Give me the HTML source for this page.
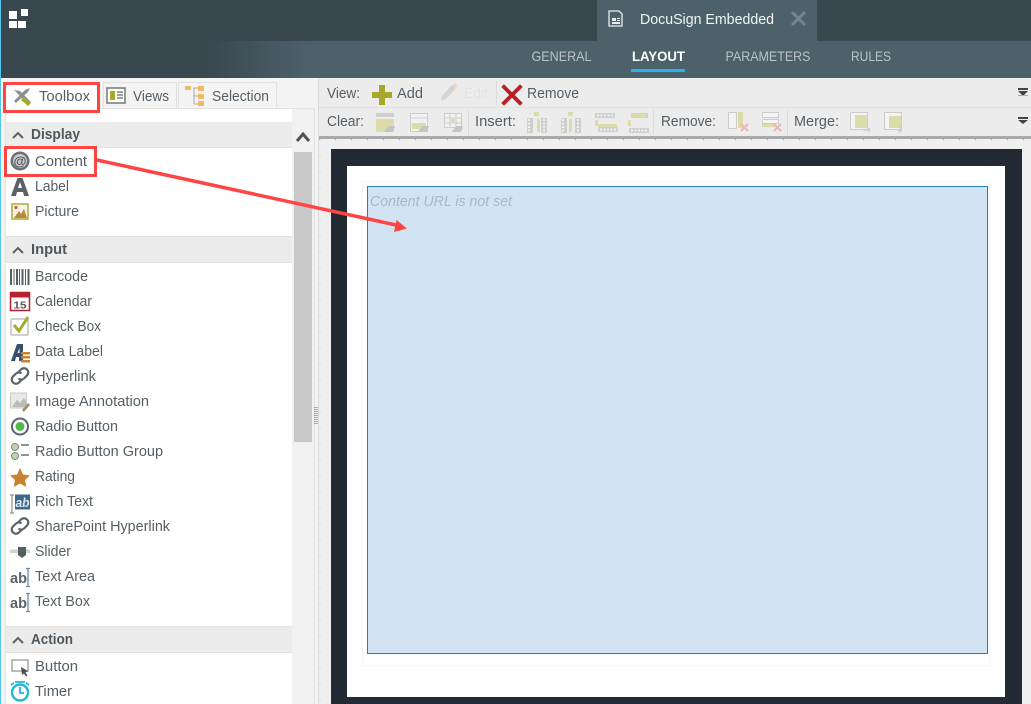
<!DOCTYPE html>
<html><head><meta charset="utf-8"><style>
html,body{margin:0;padding:0;background:#fff;overflow:hidden}
svg{display:block}
text{font-family:"Liberation Sans",sans-serif;font-size:14.8px;fill:#555e63}
.h{font-weight:bold;fill:#50585d}
.n{fill:#b9c3c7}
.y{fill:#dcdcaa}.l{fill:#cfcfcf}
</style></head><body>
<svg width="1031" height="704" viewBox="0 0 1031 704" xmlns="http://www.w3.org/2000/svg">
<defs><linearGradient id="hg" x1="0" x2="1"><stop offset="0" stop-color="#39474f"/><stop offset="0.2" stop-color="#39474f"/><stop offset="0.3" stop-color="#4d616b"/><stop offset="1" stop-color="#4d616b"/></linearGradient></defs>
<!-- header -->
<rect width="1031" height="78" fill="#39474f"/>
<rect y="41" width="1031" height="37" fill="url(#hg)"/>
<rect x="597" width="220" height="41" fill="#4d616b"/>
<rect width="1" height="704" fill="#55c5ea"/>
<path fill="#fff" d="M9 11h8v8H9zM21 9h7v7h-7zM9 21h8v7H9zM18 21h8v7h-8z"/>
<path fill="none" stroke="#e8ecee" stroke-width="1.300" d="M610 11h9l3 3v12h-13V11z"/>
<path fill="#e8ecee" d="M612 18h4v3h-4zM617 18h3v1h-3zM617 20h3v1h-3zM612 22h8v2h-8z"/>
<text x="640" y="24" textLength="134" lengthAdjust="spacingAndGlyphs" style="fill:#f2f5f6;font-size:15px">DocuSign Embedded</text>
<path d="M792 12l13 13M805 12l-13 13" stroke="#76858c" stroke-width="3" fill="none"/>
<text class="n" x="531.500" y="61" textLength="60" lengthAdjust="spacingAndGlyphs" style="font-size:14px">GENERAL</text>
<text x="632" y="61" textLength="53" lengthAdjust="spacingAndGlyphs" style="fill:#fff;font-weight:bold;font-size:14px">LAYOUT</text>
<text class="n" x="725.500" y="61" textLength="85" lengthAdjust="spacingAndGlyphs" style="font-size:14px">PARAMETERS</text>
<text class="n" x="851" y="61" textLength="40" lengthAdjust="spacingAndGlyphs" style="font-size:14px">RULES</text>
<rect x="631" y="69" width="54" height="3" fill="#29b2ec"/>
<!-- left panel -->
<rect x="1" y="78" width="317" height="626" fill="#f3f3f3"/>
<rect x="5.500" y="108.500" width="309" height="600" fill="#f1f1f1" stroke="#e2e2e2"/>
<rect x="6" y="109" width="286" height="595" fill="#fff"/>
<rect x="6" y="122" width="286" height="25" fill="#ececec"/><rect x="6" y="147" width="286" height="1" fill="#e2e2e2"/>
<rect x="6" y="236" width="286" height="1" fill="#e2e2e2"/><rect x="6" y="237" width="286" height="25" fill="#ececec"/><rect x="6" y="262" width="286" height="1" fill="#e2e2e2"/>
<rect x="6" y="626" width="286" height="1" fill="#e2e2e2"/><rect x="6" y="627" width="286" height="25" fill="#ececec"/><rect x="6" y="652" width="286" height="1" fill="#e2e2e2"/>
<!-- tabs -->
<rect x="5" y="83" width="94" height="26" fill="#fff"/>
<rect x="103.500" y="82.500" width="73" height="26" fill="#f4f4f4" stroke="#e2e2e2"/>
<rect x="178.500" y="82.500" width="98" height="26" fill="#f4f4f4" stroke="#e2e2e2"/>
<path d="M14 90l6 1 11 11-3 2-11-11z" fill="#8f8f8f"/><path d="M30 88l-2 4-12 11-2-2 11-11z" fill="#8f8f8f"/>
<path d="M24 97l7 6-3 3-7-6z" fill="#a5a92e"/>
<text x="39" y="101" textLength="51" lengthAdjust="spacingAndGlyphs" style="font-size:15px">Toolbox</text>
<rect x="107" y="88" width="18" height="15" fill="#fff" stroke="#777" stroke-width="1.500"/>
<rect x="110" y="91" width="5" height="9" fill="#a5a92e"/><path d="M117 92h6M117 95h6M117 98h6" stroke="#666" stroke-width="1.300"/>
<text x="133" y="101" textLength="36" lengthAdjust="spacingAndGlyphs" style="font-size:15px">Views</text>
<path d="M185 86h6v4h-6zM198 86h6v5h-6zM198 94h6v5h-6zM198 101h6v5h-6z" fill="#efb968"/>
<path d="M193 88h5M194 88v16M194 96h4M194 104h4" stroke="#aaa" fill="none"/>
<text x="212" y="101" textLength="57" lengthAdjust="spacingAndGlyphs" style="font-size:15px">Selection</text>
<!-- section headers -->
<path d="M13 138l5-5 5 5" fill="none" stroke="#5a6266" stroke-width="2"/>
<text class="h" x="31" y="139" textLength="49" lengthAdjust="spacingAndGlyphs">Display</text>
<path d="M13 253l5-5 5 5" fill="none" stroke="#5a6266" stroke-width="2"/>
<text class="h" x="31" y="254" textLength="36" lengthAdjust="spacingAndGlyphs">Input</text>
<path d="M13 643l5-5 5 5" fill="none" stroke="#5a6266" stroke-width="2"/>
<text class="h" x="31" y="644" textLength="42" lengthAdjust="spacingAndGlyphs">Action</text>
<!-- scrollbar -->
<path d="M297 141l6-7 6 7" fill="none" stroke="#4c5459" stroke-width="3"/>
<rect x="294" y="152" width="18" height="290" fill="#c8c8c8"/>
<path d="M315 407v17M317 407v17" stroke="#5a6266" stroke-dasharray="1 1"/>
<rect x="318" y="78" width="1" height="626" fill="#d9d9d9"/>
<!-- items -->
<text x="35" y="166" textLength="52" lengthAdjust="spacingAndGlyphs">Content</text>
<text x="35" y="191" textLength="34" lengthAdjust="spacingAndGlyphs">Label</text>
<text x="35" y="216" textLength="44" lengthAdjust="spacingAndGlyphs">Picture</text>
<text x="35" y="281" textLength="53" lengthAdjust="spacingAndGlyphs">Barcode</text>
<text x="35" y="306" textLength="57" lengthAdjust="spacingAndGlyphs">Calendar</text>
<text x="35" y="331" textLength="66" lengthAdjust="spacingAndGlyphs">Check Box</text>
<text x="35" y="356" textLength="68" lengthAdjust="spacingAndGlyphs">Data Label</text>
<text x="35" y="381" textLength="61" lengthAdjust="spacingAndGlyphs">Hyperlink</text>
<text x="35" y="406" textLength="114" lengthAdjust="spacingAndGlyphs">Image Annotation</text>
<text x="35" y="431" textLength="83" lengthAdjust="spacingAndGlyphs">Radio Button</text>
<text x="35" y="456" textLength="128" lengthAdjust="spacingAndGlyphs">Radio Button Group</text>
<text x="35" y="481" textLength="40" lengthAdjust="spacingAndGlyphs">Rating</text>
<text x="35" y="506" textLength="58" lengthAdjust="spacingAndGlyphs">Rich Text</text>
<text x="35" y="531" textLength="135" lengthAdjust="spacingAndGlyphs">SharePoint Hyperlink</text>
<text x="35" y="556" textLength="36" lengthAdjust="spacingAndGlyphs">Slider</text>
<text x="35" y="581" textLength="60" lengthAdjust="spacingAndGlyphs">Text Area</text>
<text x="35" y="606" textLength="55" lengthAdjust="spacingAndGlyphs">Text Box</text>
<text x="35" y="671" textLength="43" lengthAdjust="spacingAndGlyphs">Button</text>
<text x="35" y="696" textLength="37" lengthAdjust="spacingAndGlyphs">Timer</text>
<!-- item icons -->
<circle cx="20" cy="161" r="9.500" fill="#6a7074"/><circle cx="20" cy="161" r="7" fill="#c9cbcc"/>
<text x="13.500" y="165.500" textLength="13" lengthAdjust="spacingAndGlyphs" style="font-size:13px;font-weight:bold;fill:#4f565a">@</text>
<path d="M11 196l6.500-18h5l6.500 18h-5l-1-4h-6l-1 4zM18 188h4l-2-6z" fill="#5b6267" fill-rule="evenodd"/>
<rect x="12" y="204" width="16" height="15" fill="#f7f2e6" stroke="#a5a92e" stroke-width="1.400"/><path d="M14 218l5-7 2 3 3-5 3 9z" fill="#b58a3c"/><circle cx="16" cy="207.500" r="1.600" fill="#e0503c"/>
<path d="M10 269h2v16h-2zM13.500 269h1v16h-1zM16 269h2v16h-2zM19 269h1v16h-1zM21.500 269h2v16h-2zM25 269h1v16h-1zM27.500 269h2v16h-2z" fill="#555e63"/>
<rect x="10.500" y="292.500" width="19" height="18" fill="#fff" stroke="#b7202e" stroke-width="1.500"/><rect x="10" y="292" width="20" height="5.500" fill="#b7202e"/><text x="13.500" y="308.500" textLength="13" lengthAdjust="spacingAndGlyphs" style="font-size:10px;font-weight:bold;fill:#555">15</text>
<rect x="11" y="319" width="17" height="16" rx="1" fill="#fff" stroke="#c0c0c0" stroke-width="1.500"/><path d="M14 325l5 6 9-14" fill="none" stroke="#a5a92e" stroke-width="3"/>
<path d="M11 361l6-17h6v17h-4v-4h-3l-1 4zM17.500 353h2v-5z" fill="#34506d" fill-rule="evenodd"/><path d="M21 352h9v2.500h-9zM21 356h9v2.500h-9zM21 360h9v2.500h-9z" fill="#c8812f"/>
<g fill="none" stroke="#5d6468" stroke-width="2.200"><path d="M18.500 372l2.500-2.500a4 4 0 0 1 6 6l-3 3a4 4 0 0 1-5.500 0"/><path d="M21.500 380l-2.500 2.500a4 4 0 0 1-6-6l3-3a4 4 0 0 1 5.500 0"/></g>
<rect x="10.500" y="393" width="16" height="15" fill="#e9e9e9" stroke="#c8c8c8"/><path d="M12 407l5-7 3 3 4-5 2 3v6z" fill="#bbb"/><path d="M23 411l6-7" stroke="#a08a60" stroke-width="2.500"/>
<circle cx="20" cy="426.500" r="8" fill="#fff" stroke="#5d6468" stroke-width="2"/><circle cx="20" cy="426.500" r="4.500" fill="#52b84b"/>
<circle cx="15" cy="447" r="3.500" fill="#bcd5ab" stroke="#7d8a80"/><circle cx="15" cy="456" r="3.500" fill="#bcd5ab" stroke="#7d8a80"/><path d="M21 445h8M21 455h8" stroke="#6a7074" stroke-width="1.500"/>
<path d="M20 468l3 6.500 7 .8-5 4.700 1.300 7-6.300-3.500-6.300 3.500 1.300-7-5-4.700 7-.8z" fill="#c8812f"/>
<path d="M12 495v18M10 495h4M10 513h4" stroke="#8b8f92" stroke-width="1.200"/><rect x="15" y="494.500" width="15" height="15" fill="#3d6a8c"/><text x="15.500" y="507" textLength="14" lengthAdjust="spacingAndGlyphs" style="font-size:13px;font-style:italic;font-weight:bold;fill:#dfe8ee">ab</text>
<g fill="none" stroke="#5d6468" stroke-width="2.200"><path d="M18.500 522l2.500-2.500a4 4 0 0 1 6 6l-3 3a4 4 0 0 1-5.500 0"/><path d="M21.500 530l-2.500 2.500a4 4 0 0 1-6-6l3-3a4 4 0 0 1 5.500 0"/></g>
<rect x="10" y="549.500" width="20" height="3.500" fill="#d2d2d2"/><path d="M18 547h8v8l-4 3-4-3z" fill="#555e63"/>
<text x="10" y="583" textLength="17" lengthAdjust="spacingAndGlyphs" style="font-size:15px;font-weight:bold;fill:#5b6267">ab</text><path d="M28 568.500v18M26 568.500h4M26 586.500h4" stroke="#6d8a9e" stroke-width="1.300"/>
<text x="10" y="608" textLength="17" lengthAdjust="spacingAndGlyphs" style="font-size:15px;font-weight:bold;fill:#5b6267">ab</text><path d="M28 593.500v18M26 593.500h4M26 611.500h4" stroke="#6d8a9e" stroke-width="1.300"/>
<rect x="12" y="660" width="16" height="11" fill="#fff" stroke="#b5b5b5" stroke-width="1.800"/><path d="M21 667l7 4-2.500 1.500 2 3-1.500 1-2-3-2 1.500z" fill="#4a5257"/>
<circle cx="20" cy="692.500" r="8" fill="#fff" stroke="#22b8d6" stroke-width="2.400"/><path d="M15 682h10M20 687v6h4" fill="none" stroke="#22b8d6" stroke-width="1.800"/><path d="M11 685l3-2M29 685l-3-2" stroke="#22b8d6" stroke-width="1.800"/>
<!-- right -->
<rect x="319" y="78" width="712" height="626" fill="#ececec"/>
<rect x="319" y="107" width="712" height="1" fill="#e0e0e0"/>
<rect x="319" y="139" width="712" height="565" fill="#efefef"/>
<rect x="319" y="136" width="712" height="3" fill="#a9a9a9"/>
<path d="M319 139.500H1031" stroke="#a9a9a9" stroke-dasharray="1 15"/>
<path d="M320 139V704" stroke="#c9c9c9" stroke-dasharray="1 15"/>
<text x="327" y="98" textLength="33" lengthAdjust="spacingAndGlyphs" style="font-size:15px">View:</text>
<path d="M379 85h6v7h7v6h-7v7h-6v-7h-7v-6h7z" fill="#a8a828"/>
<text x="397" y="98" textLength="26" lengthAdjust="spacingAndGlyphs" style="font-size:15px">Add</text>
<path d="M441 101l1-5 10-11 4 3-10 11z" fill="#d4d4d4"/><circle cx="455" cy="85.500" r="2" fill="#eed5c0"/>
<text x="464" y="98" textLength="24" lengthAdjust="spacingAndGlyphs" style="font-size:15px;fill:#e2e2e2">Edit</text>
<rect x="496" y="81" width="1" height="24" fill="#dcdcdc"/>
<path d="M504 85l8 8 8-8 2 2-8 8 8 8-2 2-8-8-8 8-2-2 8-8-8-8z" fill="#b5202a" stroke="#b5202a"/>
<text x="527" y="98" textLength="52" lengthAdjust="spacingAndGlyphs" style="font-size:15px">Remove</text>
<text x="327" y="126" textLength="37" lengthAdjust="spacingAndGlyphs" style="font-size:15px">Clear:</text>
<text x="475" y="126" textLength="41" lengthAdjust="spacingAndGlyphs" style="font-size:15px">Insert:</text>
<text x="661" y="126" textLength="55" lengthAdjust="spacingAndGlyphs" style="font-size:15px">Remove:</text>
<text x="794" y="126" textLength="45" lengthAdjust="spacingAndGlyphs" style="font-size:15px">Merge:</text>
<rect x="468" y="109" width="1" height="26" fill="#dcdcdc"/><rect x="653" y="109" width="1" height="26" fill="#dcdcdc"/><rect x="787" y="109" width="1" height="26" fill="#dcdcdc"/>
<!-- clear icons -->
<rect x="376" y="113" width="18" height="4" class="l"/><rect x="376" y="119" width="18" height="13" class="y"/><path d="M384 131l5-5h6l-2 6h-8z" fill="#c4c4c4"/>
<rect x="410.500" y="113.500" width="17" height="18" fill="#f2f2f2" stroke="#ccc"/><path d="M411 118h16" stroke="#ccc"/><rect x="412" y="123" width="14" height="6" class="y"/><path d="M418 131l5-5h6l-2 6h-8z" fill="#c4c4c4"/>
<rect x="444.500" y="113.500" width="17" height="14" fill="#f2f2f2" stroke="#ccc"/><path d="M445 118h16M445 123h16M450 114v14M456 114v14" stroke="#ccc"/><rect x="451" y="119" width="4" height="3" class="y"/><path d="M452 131l5-5h6l-2 6h-8z" fill="#c4c4c4"/>
<!-- insert icons -->
<g class="l"><path d="M527 118h6v15h-6zM541 118h6v15h-6zM561 118h6v15h-6zM575 118h6v15h-6zM595 113h20v5h-20zM598 127h20v5h-20zM631 113h17v5h-17zM629 128h20v5h-20z"/></g>
<path d="M529 119v13M544 119v13M563 119v13M578 119v13" stroke="#f0f0f0" stroke-width="2" stroke-dasharray="2 1.500"/>
<path d="M597 115.500h17M600 129.500h17M633 115.500h14M631 130.500h17" stroke="#f0f0f0" stroke-width="2" stroke-dasharray="2 1.500"/>
<g class="y"><rect x="534" y="112" width="5" height="4"/><rect x="537" y="119" width="3" height="13"/><rect x="568" y="112" width="5" height="4"/><rect x="569" y="119" width="3" height="13"/><rect x="595" y="120" width="3" height="6"/><rect x="598" y="124" width="19" height="3"/><rect x="628" y="120" width="3" height="6"/><rect x="631" y="114" width="15" height="3"/></g>
<!-- remove icons -->
<rect x="728.500" y="112.500" width="8" height="16" fill="#f4f4f4" stroke="#ccc"/><rect x="738" y="112" width="5" height="16" class="y"/><path d="M741 124l7 7M748 124l-7 7" stroke="#eeb6b6" stroke-width="2"/>
<rect x="762.500" y="112.500" width="16" height="5" fill="#f4f4f4" stroke="#ccc"/><rect x="762.500" y="119.500" width="16" height="4" fill="#f4f4f4" stroke="#ccc"/><rect x="762" y="124" width="14" height="3" class="y"/><path d="M774 124l7 7M781 124l-7 7" stroke="#eeb6b6" stroke-width="2"/>
<!-- merge icons -->
<rect x="850.500" y="112.500" width="17" height="17" fill="#f4f4f4" stroke="#ccc"/><rect x="855" y="115" width="12" height="13" class="y"/><path d="M863 130h7M868 128l2 2-2 2" fill="none" stroke="#ccc" stroke-width="1.300"/>
<rect x="884.500" y="112.500" width="17" height="17" fill="#f4f4f4" stroke="#ccc"/><rect x="889" y="116" width="12" height="12" class="y"/><path d="M900 126v6M898 130l2 2 2-2" fill="none" stroke="#ccc" stroke-width="1.300"/>
<!-- dropdowns -->
<path d="M1018 88h10v2h-10zM1018 91h10l-5 5z" fill="#3e464b"/><rect x="1018" y="95" width="10" height="1" fill="#a8c040"/>
<path d="M1018 117h10v2h-10zM1018 120h10l-5 4z" fill="#3e464b"/>
<!-- canvas -->
<rect x="331" y="149" width="691" height="555" fill="#222b33"/>
<rect x="347" y="166" width="658" height="531" fill="#fff"/>
<rect x="362.500" y="181.500" width="627" height="484" fill="none" stroke="#e8e8e8" stroke-dasharray="1 1"/>
<rect x="367.500" y="186.500" width="620" height="467" fill="#d2e4f3" stroke="#2a7cc0"/>
<text x="370" y="206" textLength="142" lengthAdjust="spacingAndGlyphs" style="font-style:italic;fill:#a9b8c4;font-size:15px">Content URL is not set</text>
<!-- annotations -->
<rect x="4.500" y="83.500" width="94" height="28" fill="none" stroke="#ff4444" stroke-width="3"/>
<rect x="5.500" y="147.500" width="90" height="28" fill="none" stroke="#ff4444" stroke-width="3"/>
<path d="M97 160L396 225" stroke="#ff4444" stroke-width="3.500"/>
<path d="M407 228.500L394 232l2.500-12z" fill="#ff4444"/>
</svg>
</body></html>
